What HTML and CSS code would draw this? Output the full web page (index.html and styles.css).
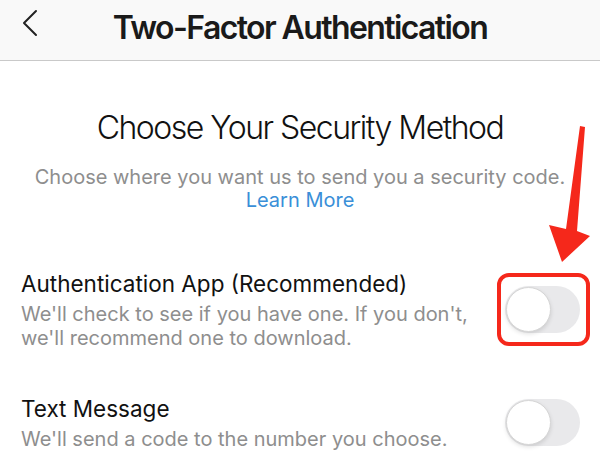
FILE: index.html
```html
<!DOCTYPE html>
<html lang="en">
<head>
    <meta charset="UTF-8">
    <meta name="viewport" content="width=device-width, initial-scale=1.0">
    <title>Two-Factor Authentication</title>
    <link rel="stylesheet" href="styles.css">
</head>
<body>
    <div class="screen">
        <header class="nav-bar">
            <button class="back-btn" aria-label="Back">
                <svg width="16" height="28" viewBox="0 0 16 28">
                    <path d="M14 2 L2 14 L14 26" fill="none" stroke="#222" stroke-width="2" stroke-linecap="round" stroke-linejoin="round"/>
                </svg>
            </button>
            <h1>Two-Factor Authentication</h1>
        </header>

        <section class="intro">
            <h2>Choose Your Security Method</h2>
            <p>Choose where you want us to send you a security code.<br>
                <a href="#" class="learn-more">Learn More</a></p>
        </section>

        <div class="option">
            <div class="option-text">
                <div class="option-title">Authentication App (Recommended)</div>
                <div class="option-desc">We'll check to see if you have one. If you don't,<br>we'll recommend one to download.</div>
            </div>
            <div class="toggle-frame highlighted">
                <div class="toggle"><span class="knob"></span></div>
            </div>
        </div>

        <div class="option">
            <div class="option-text">
                <div class="option-title">Text Message</div>
                <div class="option-desc">We'll send a code to the number you choose.</div>
            </div>
            <div class="toggle-frame">
                <div class="toggle"><span class="knob"></span></div>
            </div>
        </div>

        <!-- annotation arrow pointing at the first toggle -->
        <svg class="arrow" width="600" height="475" viewBox="0 0 600 475">
            <polygon points="580,126 585,127 577,231 590,236 562,262 549,225 566,229" fill="#f5281b"/>
        </svg>
    </div>
</body>
</html>
```

FILE: styles.css
```css
body {
    margin: 0;
    background: #fff;
    font-family: 'Inter', 'Liberation Sans', sans-serif;
    color: #111;
}

.screen {
    position: relative;
    width: 600px;
    height: 475px;
    overflow: hidden;
}

.nav-bar {
    height: 60px;
    background: #f9f9f9;
    border-bottom: 1px solid #c9c9c9;
    display: flex;
    align-items: center;
    justify-content: center;
    position: relative;
}

.nav-bar h1 {
    margin: 0 0 6px 0;
    font-size: 32px;
    font-weight: 600;
    letter-spacing: -1.6px;
    color: #1a1a1a;
}

.back-btn {
    position: absolute;
    left: 22px;
    top: 9px;
    background: none;
    border: none;
    padding: 0;
}

.intro {
    text-align: center;
    padding-top: 47px;
}

.intro h2 {
    margin: 0;
    font-size: 32px;
    font-weight: 300;
    line-height: 40px;
    letter-spacing: -1.5px;
    color: #111;
}

.intro p {
    margin: 18px 0 0 0;
    font-size: 20px;
    line-height: 23px;
    color: #8e8e8e;
}

.learn-more {
    color: #3a8fd8;
    text-decoration: none;
}

.option {
    display: flex;
    align-items: center;
    justify-content: space-between;
    padding: 0 10px 0 21px;
}

.option + .option {
    margin-top: 36px;
}

.intro + .option {
    margin-top: 57px;
}

.option-title {
    font-size: 22.5px;
    line-height: 30px;
    color: #111;
}

.option-desc {
    margin-top: 3px;
    font-size: 20px;
    line-height: 24px;
    color: #8e8e8e;
}

.toggle-frame {
    padding: 9px 6px 9px 4px;
    border: 4px solid transparent;
    border-radius: 12px;
}

.toggle-frame.highlighted {
    border-color: #f5281b;
}

.toggle {
    width: 75px;
    height: 47px;
    border-radius: 24px;
    background: #e9e9eb;
    position: relative;
}

.knob {
    position: absolute;
    left: 1px;
    top: 1px;
    width: 43px;
    height: 43px;
    border-radius: 50%;
    background: #fff;
    border: 1px solid #d6d6d6;
    box-shadow: 0 2px 4px rgba(0, 0, 0, 0.12);
}

.arrow {
    position: absolute;
    left: 0;
    top: 0;
    pointer-events: none;
}
```
